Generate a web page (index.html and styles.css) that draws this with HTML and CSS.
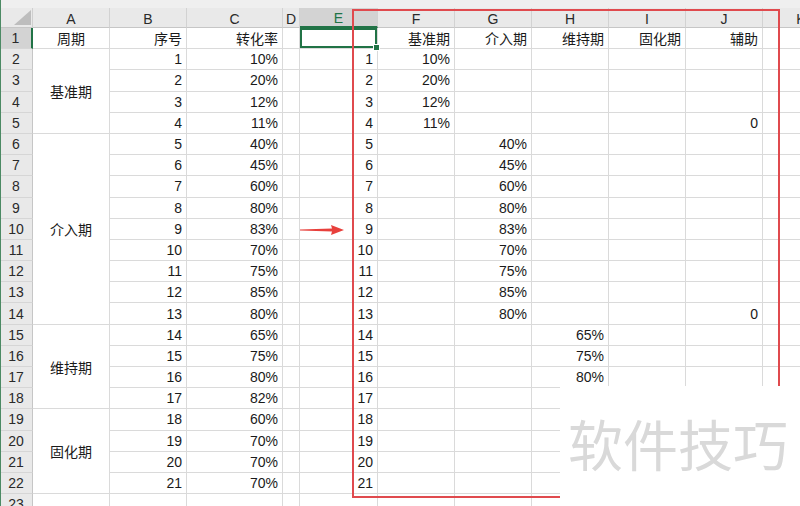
FILE: index.html
```html
<!DOCTYPE html>
<html lang="zh-CN">
<head>
<meta charset="utf-8">
<title>Sheet</title>
<link rel="stylesheet" href="styles.css">
</head>
<body>
<div class="sheet">
  <div class="topbar"></div>
  <div class="grid">
    <div class="corner"><svg width="17" height="15" viewBox="0 0 17 15"><polygon points="17,0 17,15 0,15" fill="#bdbdbd"/></svg></div>
    <div class="ch">A</div><div class="ch">B</div><div class="ch">C</div><div class="ch">D</div><div class="ch sel">E</div><div class="ch">F</div><div class="ch">G</div><div class="ch">H</div><div class="ch">I</div><div class="ch">J</div><div class="ch">K</div>

    <div class="rh sel">1</div><div class="c ctr">周期</div><div class="c">序号</div><div class="c">转化率</div><div class="c"></div><div class="c active"></div><div class="c">基准期</div><div class="c">介入期</div><div class="c">维持期</div><div class="c">固化期</div><div class="c">辅助</div><div class="c"></div>

    <div class="rh">2</div><div class="c ctr m4">基准期</div><div class="c">1</div><div class="c">10%</div><div class="c"></div><div class="c">1</div><div class="c">10%</div><div class="c"></div><div class="c"></div><div class="c"></div><div class="c"></div><div class="c"></div>
    <div class="rh">3</div><div class="c">2</div><div class="c">20%</div><div class="c"></div><div class="c">2</div><div class="c">20%</div><div class="c"></div><div class="c"></div><div class="c"></div><div class="c"></div><div class="c"></div>
    <div class="rh">4</div><div class="c">3</div><div class="c">12%</div><div class="c"></div><div class="c">3</div><div class="c">12%</div><div class="c"></div><div class="c"></div><div class="c"></div><div class="c"></div><div class="c"></div>
    <div class="rh">5</div><div class="c">4</div><div class="c">11%</div><div class="c"></div><div class="c">4</div><div class="c">11%</div><div class="c"></div><div class="c"></div><div class="c"></div><div class="c">0</div><div class="c"></div>

    <div class="rh">6</div><div class="c ctr m9">介入期</div><div class="c">5</div><div class="c">40%</div><div class="c"></div><div class="c">5</div><div class="c"></div><div class="c">40%</div><div class="c"></div><div class="c"></div><div class="c"></div><div class="c"></div>
    <div class="rh">7</div><div class="c">6</div><div class="c">45%</div><div class="c"></div><div class="c">6</div><div class="c"></div><div class="c">45%</div><div class="c"></div><div class="c"></div><div class="c"></div><div class="c"></div>
    <div class="rh">8</div><div class="c">7</div><div class="c">60%</div><div class="c"></div><div class="c">7</div><div class="c"></div><div class="c">60%</div><div class="c"></div><div class="c"></div><div class="c"></div><div class="c"></div>
    <div class="rh">9</div><div class="c">8</div><div class="c">80%</div><div class="c"></div><div class="c">8</div><div class="c"></div><div class="c">80%</div><div class="c"></div><div class="c"></div><div class="c"></div><div class="c"></div>
    <div class="rh">10</div><div class="c">9</div><div class="c">83%</div><div class="c"></div><div class="c">9</div><div class="c"></div><div class="c">83%</div><div class="c"></div><div class="c"></div><div class="c"></div><div class="c"></div>
    <div class="rh">11</div><div class="c">10</div><div class="c">70%</div><div class="c"></div><div class="c">10</div><div class="c"></div><div class="c">70%</div><div class="c"></div><div class="c"></div><div class="c"></div><div class="c"></div>
    <div class="rh">12</div><div class="c">11</div><div class="c">75%</div><div class="c"></div><div class="c">11</div><div class="c"></div><div class="c">75%</div><div class="c"></div><div class="c"></div><div class="c"></div><div class="c"></div>
    <div class="rh">13</div><div class="c">12</div><div class="c">85%</div><div class="c"></div><div class="c">12</div><div class="c"></div><div class="c">85%</div><div class="c"></div><div class="c"></div><div class="c"></div><div class="c"></div>
    <div class="rh">14</div><div class="c">13</div><div class="c">80%</div><div class="c"></div><div class="c">13</div><div class="c"></div><div class="c">80%</div><div class="c"></div><div class="c"></div><div class="c">0</div><div class="c"></div>

    <div class="rh">15</div><div class="c ctr m4">维持期</div><div class="c">14</div><div class="c">65%</div><div class="c"></div><div class="c">14</div><div class="c"></div><div class="c"></div><div class="c">65%</div><div class="c"></div><div class="c"></div><div class="c"></div>
    <div class="rh">16</div><div class="c">15</div><div class="c">75%</div><div class="c"></div><div class="c">15</div><div class="c"></div><div class="c"></div><div class="c">75%</div><div class="c"></div><div class="c"></div><div class="c"></div>
    <div class="rh">17</div><div class="c">16</div><div class="c">80%</div><div class="c"></div><div class="c">16</div><div class="c"></div><div class="c"></div><div class="c">80%</div><div class="c"></div><div class="c"></div><div class="c"></div>
    <div class="rh">18</div><div class="c">17</div><div class="c">82%</div><div class="c"></div><div class="c">17</div><div class="c"></div><div class="c"></div><div class="c"></div><div class="c"></div><div class="c"></div><div class="c"></div>

    <div class="rh">19</div><div class="c ctr m4">固化期</div><div class="c">18</div><div class="c">60%</div><div class="c"></div><div class="c">18</div><div class="c"></div><div class="c"></div><div class="c"></div><div class="c"></div><div class="c"></div><div class="c"></div>
    <div class="rh">20</div><div class="c">19</div><div class="c">70%</div><div class="c"></div><div class="c">19</div><div class="c"></div><div class="c"></div><div class="c"></div><div class="c"></div><div class="c"></div><div class="c"></div>
    <div class="rh">21</div><div class="c">20</div><div class="c">70%</div><div class="c"></div><div class="c">20</div><div class="c"></div><div class="c"></div><div class="c"></div><div class="c"></div><div class="c"></div><div class="c"></div>
    <div class="rh">22</div><div class="c">21</div><div class="c">70%</div><div class="c"></div><div class="c">21</div><div class="c"></div><div class="c"></div><div class="c"></div><div class="c"></div><div class="c"></div><div class="c"></div>

    <div class="rh">23</div><div class="c"></div><div class="c"></div><div class="c"></div><div class="c"></div><div class="c"></div><div class="c"></div><div class="c"></div><div class="c"></div><div class="c"></div><div class="c"></div><div class="c"></div>
  </div>

  <div class="edge"></div>
  <div class="frame"></div>
  <svg class="arrow" width="44" height="12" viewBox="0 0 44 12"><polygon points="0,5.6 32,4.4 31,1 44,6 31,11 32,7.6 0,6.4" fill="#e8403c"/></svg>
  <div class="watermark">软件技巧</div>
</div>
</body>
</html>
```
FILE: styles.css
```css
html, body {
  margin: 0;
  padding: 0;
  background: #ffffff;
}
body {
  width: 800px;
  height: 506px;
  overflow: hidden;
  font-family: "Liberation Sans", "Noto Sans CJK SC", sans-serif;
  font-size: 14px;
  color: #1a1a1a;
}
.sheet {
  position: relative;
  width: 800px;
  height: 506px;
  overflow: hidden;
}
.topbar {
  height: 8px;
  background: #efefef;
}
.grid {
  display: grid;
  grid-template-columns: 33px 77px 77px 96px 17px 78px 77px 77px 77px 77px 77px 77px;
  grid-template-rows: 20px repeat(23, 21.2px);
  width: 840px;
}
.grid > div {
  box-sizing: border-box;
  display: flex;
  align-items: center;
  white-space: nowrap;
  overflow: hidden;
}
.corner {
  background: #e9e9e9;
  border-right: 1px solid #cfcfcf;
  border-bottom: 1px solid #c6c6c6;
  justify-content: flex-end;
  align-items: flex-end !important;
  padding: 0 1px 2px 0;
}
.corner svg { display: block; }
.ch {
  background: #e9e9e9;
  border-right: 1px solid #d2d2d2;
  border-bottom: 1px solid #c6c6c6;
  justify-content: center;
  color: #2a2a2a;
  padding-top: 2px;
}
.ch.sel {
  background: #d3d3d3;
  color: #217346;
  border-bottom: 2px solid #217346;
}
.rh {
  background: #e9e9e9;
  border-right: 1px solid #c6c6c6;
  border-bottom: 1px solid #d6d6d6;
  justify-content: center;
  color: #2a2a2a;
}
.rh.sel {
  background: #d3d3d3;
  border-right: 2px solid #217346;
}
.c {
  border-right: 1px solid #dadada;
  border-bottom: 1px solid #dadada;
  justify-content: flex-end;
  padding: 0 4px;
}
.c.ctr { justify-content: center; }
.m4 { grid-row: span 4; }
.m9 { grid-row: span 9; }
.grid > .active {
  position: relative;
  overflow: visible;
  box-shadow: inset 0 0 0 2px #217346;
}
.active::after {
  content: "";
  position: absolute;
  right: -3px;
  bottom: -3px;
  width: 5px;
  height: 5px;
  background: #217346;
  border: 1px solid #ffffff;
}
.edge {
  position: absolute;
  left: 0;
  top: 0;
  width: 1px;
  height: 506px;
  background: #4c8a64;
}
.frame {
  position: absolute;
  left: 352px;
  top: 9px;
  width: 428px;
  height: 489px;
  box-sizing: border-box;
  border: 2px solid #e04a4e;
}
.arrow {
  position: absolute;
  left: 300px;
  top: 224px;
}
.watermark {
  position: absolute;
  left: 560px;
  top: 386px;
  width: 240px;
  height: 120px;
  background: #ffffff;
  color: #d9d9d9;
  font-family: "Noto Sans CJK SC", sans-serif;
  font-size: 55px;
  line-height: 55px;
  padding: 29px 0 0 8px;
  box-sizing: border-box;
  white-space: nowrap;
}
```
